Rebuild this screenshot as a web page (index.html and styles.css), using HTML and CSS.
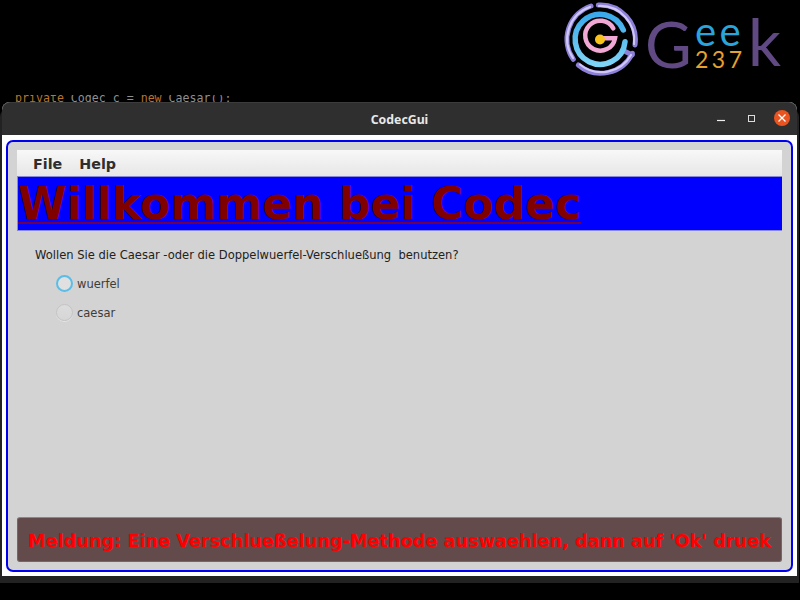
FILE: index.html
```html
<!DOCTYPE html>
<html lang="de">
<head>
<meta charset="utf-8">
<title>CodecGui</title>
<link rel="stylesheet" href="styles.css">
</head>
<body>
<header class="top">
  <div class="logo">
    <svg class="logo-mark" width="80" height="80" viewBox="0 0 80 80" fill="none" stroke-linecap="round">
      <defs>
        <linearGradient id="blue" x1="0" y1="0" x2="0" y2="1">
          <stop offset="0" stop-color="#3aa8ea"/>
          <stop offset="1" stop-color="#7fd4f6"/>
        </linearGradient>
      </defs>
      <g stroke="#8d80d8" stroke-width="5">
        <path d="M31 6 A35 35 0 0 0 13.3 59.3"/>
        <path d="M38.3 5 A35 35 0 0 1 75 45"/>
        <path d="M72.3 53.3 A35 35 0 0 1 18.3 65"/>
        <path d="M65.7 51.7 L72.3 55"/>
      </g>
      <g stroke="#cfc8f6" stroke-width="2.2">
        <path d="M30 7 A34 34 0 0 0 13 58"/>
        <path d="M39 6 A34 34 0 0 1 74 44"/>
        <path d="M71 55 A34 34 0 0 1 20 64.5"/>
      </g>
      <path d="M63.3 30 A25 25 0 1 0 65 41.7" stroke="url(#blue)" stroke-width="5.5"/>
      <path d="M53.3 28.3 A15 15 0 1 0 55 38.3 H43.3" stroke="#f2a8d4" stroke-width="4.5"/>
      <circle cx="40" cy="39.5" r="5" fill="#f8c41c"/>
    </svg>
    <div class="wordmark">
      <span class="big-g">G</span>
      <div class="mid"><span class="ee">ee</span><span class="num">237</span></div>
      <span class="big-k">k</span>
    </div>
  </div>
</header>
<div class="codeline"><b>private</b> Codec c = <b>new</b> Caesar();</div>
<main class="window">
  <div class="titlebar">
    <span class="title">CodecGui</span>
    <div class="controls">
      <svg class="ctl" width="12" height="12" viewBox="0 0 12 12"><path d="M1 8.5H9" stroke="#eee" stroke-width="1.2"/></svg>
      <svg class="ctl" width="12" height="12" viewBox="0 0 12 12"><rect x="2.5" y="3.5" width="6" height="6" fill="none" stroke="#ddd" stroke-width="1"/></svg>
      <span class="close"><svg width="10" height="10" viewBox="0 0 10 10"><path d="M1.5 1.5L8.5 8.5M8.5 1.5L1.5 8.5" stroke="#fff" stroke-width="1.3"/></svg></span>
    </div>
  </div>
  <div class="client">
    <div class="frame">
      <nav class="menubar"><span>File</span><span>Help</span></nav>
      <h1 class="banner"><span>Willkommen bei Codec</span></h1>
      <div class="content">
        <p class="question">Wollen Sie die Caesar -oder die Doppelwuerfel-Verschlueßung&nbsp; benutzen?</p>
        <label class="radio focus"><i></i>wuerfel</label>
        <label class="radio"><i></i>caesar</label>
      </div>
      <footer class="status">Meldung: Eine Verschlueßelung-Methode auswaehlen, dann auf 'Ok' druek</footer>
    </div>
  </div>
</main>
</body>
</html>
```
FILE: styles.css
```css
* { box-sizing: border-box; }
html, body { margin: 0; height: 600px; overflow: hidden; background: #000; }
body { font-family: "DejaVu Sans", sans-serif; }
.top { height: 95px; display: flex; justify-content: flex-end; }
.logo { display: flex; align-items: flex-start; width: 240px; }
.logo-mark { flex: none; }
.wordmark { display: flex; align-items: flex-start; font-family: "Lato", sans-serif; margin-left: 5px; font-weight: 400; }
.big-g { color: #614a84; font-size: 64px; line-height: 64px; margin-top: 12px; width: 50px; }
.mid { display: flex; flex-direction: column; width: 53px; margin-top: 15px; }
.ee { color: #2aa4dc; font-size: 40px; line-height: 32px; letter-spacing: 3.5px; }
.num { color: #e8a030; font-size: 23px; line-height: 24px; letter-spacing: 3.5px; }
.big-k { color: #614a84; font-size: 65px; line-height: 64px; margin-top: 9px; }
.codeline { height: 7px; overflow: hidden; padding-left: 15px; font: 11.6px/6px "DejaVu Sans Mono", monospace; color: #8f8f8f; }
.codeline b { font-weight: normal; color: #b8742c; }
.window { margin-left: 2px; width: 795px; height: 474px; background: #fff; border-radius: 8px 8px 0 0; display: flex; flex-direction: column; box-shadow: 2px 7px 0 #222, -2px 7px 0 #222; }
.titlebar { height: 33px; flex: none; background: #302f2f; border-top: 1px solid #3c3c3c; border-radius: 8px 8px 0 0; display: flex; align-items: center; justify-content: center; position: relative; }
.title { color: #e8e8e8; font: bold 12.3px "Noto Sans", sans-serif; }
.controls { position: absolute; right: 7px; top: 7px; display: flex; align-items: center; gap: 18px; }
.ctl { display: block; }
.close { width: 16px; height: 16px; border-radius: 50%; background: #e95420; display: flex; align-items: center; justify-content: center; margin-left: -2px; }
.client { flex: 1; padding: 5px 4px 4px; min-height: 0; }
.frame { height: 100%; border: 2px solid #0000f0; border-radius: 7px; background: #d3d3d3; padding: 8px 9px; display: flex; flex-direction: column; }
.menubar { height: 26px; flex: none; background: linear-gradient(#f8f8f8, #e6e6e6); display: flex; align-items: center; gap: 17px; padding: 1px 0 0 16px; font: bold 14.3px "DejaVu Sans", sans-serif; color: #2e2e2e; }
.banner { margin: 0; height: 55px; flex: none; background: #0000ff; border: 1px solid #8888d8; border-width: 1px 0 1px 1px; font: bold 44.1px/53px "DejaVu Sans", sans-serif; color: #800000; white-space: nowrap; overflow: hidden; }
.banner span { display: block; width: fit-content; text-decoration: underline #700048 2px; text-underline-offset: 3px; text-decoration-skip-ink: none; }
.content { flex: 1; padding: 17px 18px 0; min-height: 0; }
.question { margin: 0 0 6px; font-size: 11.52px; line-height: 15px; color: #222; }
.radio { display: flex; align-items: center; gap: 4px; height: 29px; padding-left: 21px; font-size: 11.5px; color: #3d3d3d; }
.radio i { width: 17px; height: 17px; border-radius: 50%; background: linear-gradient(#dcdcdc, #d6d6d6); border: 1px solid #c4c4c4; box-shadow: 0 1px 0 #e4e4e4; }
.radio.focus i { border: 2px solid #5bbde6; background: #e0e0e0; box-shadow: none; }
.status { height: 45px; flex: none; padding-top: 2px; background: #634b4b; border: 1px solid #75666a; border-top-color: #8f8585; border-radius: 3px; display: flex; align-items: center; justify-content: center; color: #ff0000; font-size: 17.7px; font-weight: bold; white-space: nowrap; overflow: hidden; }
```
